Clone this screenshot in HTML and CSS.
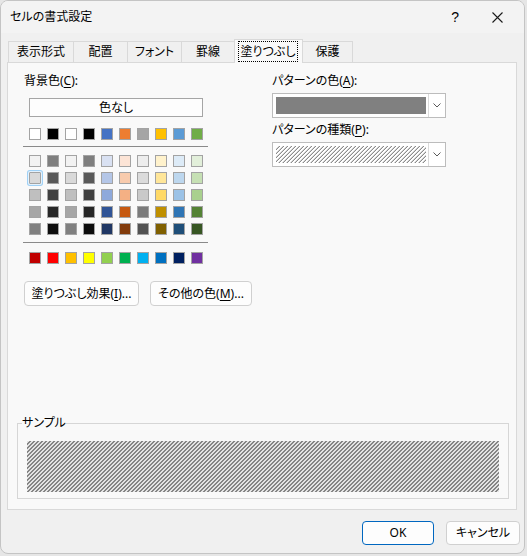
FILE: index.html
```html
<!DOCTYPE html>
<html lang="ja">
<head>
<meta charset="utf-8">
<title>セルの書式設定</title>
<link rel="stylesheet" href="styles.css">
</head>
<body>
<svg class="defs" width="0" height="0" aria-hidden="true">
  <defs>
    <pattern id="hatchDark" width="4" height="4" patternUnits="userSpaceOnUse">
      <rect width="4" height="4" fill="#e4e4e4"/>
      <rect x="2" y="0" width="2" height="1" fill="#858585"/>
      <rect x="1" y="1" width="2" height="1" fill="#858585"/>
      <rect x="0" y="2" width="2" height="1" fill="#858585"/>
      <rect x="0" y="3" width="1" height="1" fill="#858585"/>
      <rect x="3" y="3" width="1" height="1" fill="#858585"/>
    </pattern>
    <pattern id="hatchLight" width="4" height="4" patternUnits="userSpaceOnUse">
      <rect width="4" height="4" fill="#ffffff"/>
      <rect x="3" y="0" width="1" height="1" fill="#8c8c8c"/>
      <rect x="2" y="1" width="1" height="1" fill="#8c8c8c"/>
      <rect x="1" y="2" width="1" height="1" fill="#8c8c8c"/>
      <rect x="0" y="3" width="1" height="1" fill="#8c8c8c"/>
      <rect x="2" y="0" width="1" height="1" fill="#d4d4d4"/>
      <rect x="1" y="1" width="1" height="1" fill="#d4d4d4"/>
      <rect x="0" y="2" width="1" height="1" fill="#d4d4d4"/>
      <rect x="3" y="3" width="1" height="1" fill="#d4d4d4"/>
    </pattern>
  </defs>
</svg>
<div class="dialog">
  <div class="titlebar">
    <span class="title">セルの書式設定</span>
    <span class="help">?</span>
    <span class="close"><svg width="11" height="11" viewBox="0 0 11 11"><path d="M0.5 0.5L10.5 10.5M10.5 0.5L0.5 10.5" stroke="#1a1a1a" stroke-width="1.1" fill="none"/></svg></span>
  </div>
  <div class="tabs">
    <div class="tab t1">表示形式</div>
    <div class="tab t2">配置</div>
    <div class="tab t3">フォント</div>
    <div class="tab t4">罫線</div>
    <div class="tab t5 active"><span class="focus">塗りつぶし</span></div>
    <div class="tab t6">保護</div>
  </div>
  <div class="panel">
    <div class="cols">
      <div class="left">
        <div class="label">背景色(<u>C</u>):</div>
        <div class="none-btn">色なし</div>
        <div class="row">
          <span class="sw" style="background:#FFFFFF"></span>
          <span class="sw" style="background:#000000"></span>
          <span class="sw" style="background:#FFFFFF"></span>
          <span class="sw" style="background:#000000"></span>
          <span class="sw" style="background:#4472C4"></span>
          <span class="sw" style="background:#ED7D31"></span>
          <span class="sw" style="background:#A5A5A5"></span>
          <span class="sw" style="background:#FFC000"></span>
          <span class="sw" style="background:#5B9BD5"></span>
          <span class="sw" style="background:#70AD47"></span>
        </div>
        <div class="sep"></div>
        <div class="grid">
          <span class="sw" style="background:#F2F2F2"></span>
          <span class="sw" style="background:#7F7F7F"></span>
          <span class="sw" style="background:#F2F2F2"></span>
          <span class="sw" style="background:#7F7F7F"></span>
          <span class="sw" style="background:#D9E1F2"></span>
          <span class="sw" style="background:#FCE4D6"></span>
          <span class="sw" style="background:#EDEDED"></span>
          <span class="sw" style="background:#FFF2CC"></span>
          <span class="sw" style="background:#DDEBF7"></span>
          <span class="sw" style="background:#E2EFDA"></span>

          <span class="sw selected" style="background:#D9D9D9"></span>
          <span class="sw" style="background:#595959"></span>
          <span class="sw" style="background:#D9D9D9"></span>
          <span class="sw" style="background:#595959"></span>
          <span class="sw" style="background:#B4C6E7"></span>
          <span class="sw" style="background:#F8CBAD"></span>
          <span class="sw" style="background:#DBDBDB"></span>
          <span class="sw" style="background:#FFE699"></span>
          <span class="sw" style="background:#BDD7EE"></span>
          <span class="sw" style="background:#C6E0B4"></span>

          <span class="sw" style="background:#BFBFBF"></span>
          <span class="sw" style="background:#404040"></span>
          <span class="sw" style="background:#BFBFBF"></span>
          <span class="sw" style="background:#404040"></span>
          <span class="sw" style="background:#8EA9DB"></span>
          <span class="sw" style="background:#F4B084"></span>
          <span class="sw" style="background:#C9C9C9"></span>
          <span class="sw" style="background:#FFD966"></span>
          <span class="sw" style="background:#9BC2E6"></span>
          <span class="sw" style="background:#A9D08E"></span>

          <span class="sw" style="background:#A6A6A6"></span>
          <span class="sw" style="background:#262626"></span>
          <span class="sw" style="background:#A6A6A6"></span>
          <span class="sw" style="background:#262626"></span>
          <span class="sw" style="background:#305496"></span>
          <span class="sw" style="background:#C65911"></span>
          <span class="sw" style="background:#7B7B7B"></span>
          <span class="sw" style="background:#BF8F00"></span>
          <span class="sw" style="background:#2F75B5"></span>
          <span class="sw" style="background:#548235"></span>

          <span class="sw" style="background:#808080"></span>
          <span class="sw" style="background:#0D0D0D"></span>
          <span class="sw" style="background:#808080"></span>
          <span class="sw" style="background:#0D0D0D"></span>
          <span class="sw" style="background:#203764"></span>
          <span class="sw" style="background:#833C0C"></span>
          <span class="sw" style="background:#525252"></span>
          <span class="sw" style="background:#806000"></span>
          <span class="sw" style="background:#1F4E78"></span>
          <span class="sw" style="background:#375623"></span>
        </div>
        <div class="sep sep2"></div>
        <div class="row std">
          <span class="sw" style="background:#C00000"></span>
          <span class="sw" style="background:#FF0000"></span>
          <span class="sw" style="background:#FFC000"></span>
          <span class="sw" style="background:#FFFF00"></span>
          <span class="sw" style="background:#92D050"></span>
          <span class="sw" style="background:#00B050"></span>
          <span class="sw" style="background:#00B0F0"></span>
          <span class="sw" style="background:#0070C0"></span>
          <span class="sw" style="background:#002060"></span>
          <span class="sw" style="background:#7030A0"></span>
        </div>
        <div class="btnrow">
          <div class="btn fx">塗りつぶし効果(<u>I</u>)...</div>
          <div class="btn more">その他の色(<u>M</u>)...</div>
        </div>
      </div>
      <div class="right">
        <div class="label">パターンの色(<u>A</u>):</div>
        <div class="combo">
          <div class="fill gray"></div>
          <div class="drop"><svg width="8" height="5" viewBox="0 0 8 5"><path d="M0.5 0.5L4 4L7.5 0.5" stroke="#5a5a5a" stroke-width="1" fill="none"/></svg></div>
        </div>
        <div class="label lab2">パターンの種類(<u>P</u>):</div>
        <div class="combo">
          <div class="fill"><svg class="pat" width="150" height="17"><rect width="150" height="17" fill="url(#hatchLight)"/></svg></div>
          <div class="drop"><svg width="8" height="5" viewBox="0 0 8 5"><path d="M0.5 0.5L4 4L7.5 0.5" stroke="#5a5a5a" stroke-width="1" fill="none"/></svg></div>
        </div>
      </div>
    </div>
    <fieldset class="sample">
      <legend>サンプル</legend>
      <div class="hatch"><svg class="pat" width="472" height="51"><rect width="472" height="51" fill="url(#hatchDark)"/></svg></div>
    </fieldset>
  </div>
  <div class="footer">
    <div class="btn ok">OK</div>
    <div class="btn cancel">キャンセル</div>
  </div>
</div>
</body>
</html>
```
FILE: styles.css
```css
* { box-sizing: border-box; }
html, body { margin: 0; padding: 0; }
body {
  background: #e6e6e6;
  font-family: "Noto Sans", "Noto Sans CJK JP", sans-serif;
  font-size: 12px;
  color: #000;
  font-feature-settings: "palt";
  width: 527px;
  height: 556px;
  overflow: hidden;
}
u { text-decoration-thickness: 1px; text-underline-offset: 2px; }
.defs { position: absolute; width: 0; height: 0; overflow: hidden; }
.pat { display: block; }

.dialog {
  width: 525px;
  height: 554px;
  border: 1px solid #c4c4c4;
  border-radius: 8px;
  background: #f0f0f0;
  display: flex;
  flex-direction: column;
  overflow: hidden;
}

.titlebar {
  height: 32px;
  flex: none;
  display: flex;
  align-items: center;
  padding-left: 9px;
  background: #f3f3f3;
}
.title { flex: 1; font-size: 12px; line-height: 16px; }
.help { font-size: 14px; line-height: 16px; margin-right: 33px; font-family: "Liberation Sans", sans-serif; }
.close { width: 11px; height: 11px; margin-right: 21px; display: flex; }

.tabs {
  height: 29px;
  flex: none;
  display: flex;
  align-items: flex-end;
  padding-left: 7px;
}
.tab {
  height: 21px;
  border: 1px solid #d9d9d9;
  border-bottom: none;
  margin-right: -1px;
  background: #f0f0f0;
  display: flex;
  align-items: center;
  justify-content: center;
  line-height: 16px;
  white-space: nowrap;
}
.t1 { width: 66px; }
.t2 { width: 55px; }
.t3 { width: 55px; }
.t4 { width: 54px; }
.t5 { width: 69px; }
.t6 { width: 51px; }
.tab.active {
  height: 24px;
  margin-bottom: -1px;
  background: #f9f9f9;
  position: relative;
  z-index: 1;
  align-items: stretch;
  padding: 1px 4px 1px 3px;
}
.focus {
  flex: 1;
  border: 1px dotted #000;
  display: flex;
  align-items: center;
  justify-content: center;
}

.panel {
  flex: none;
  height: 448px;
  margin: 0 7px 0 6px;
  border: 1px solid #d9d9d9;
  background: #f9f9f9;
  display: flex;
  flex-direction: column;
}

.cols {
  display: grid;
  grid-template-columns: 248px 174px;
  padding: 10px 0 0 16px;
}
.label { line-height: 16px; height: 16px; white-space: nowrap; }
.none-btn {
  margin: 9px 0 0 5px;
  width: 174px;
  height: 19px;
  border: 1px solid #a5a5a5;
  background: #fdfdfd;
  text-align: center;
  line-height: 17px;
}
.row {
  display: flex;
  gap: 6px;
  margin: 11px 0 0 5px;
}
.sw {
  display: block;
  width: 12px;
  height: 12px;
  border: 1px solid #a3a3a3;
}
.sw.selected {
  box-shadow: 0 0 0 1px #e4f2fd, 0 0 0 2px #9fd0f5;
  border-radius: 1px;
}
.sep {
  width: 185px;
  height: 1px;
  margin: 6px 0 0 -1px;
  background: #8a8a8a;
}
.grid {
  display: grid;
  grid-template-columns: repeat(10, 12px);
  gap: 5px 6px;
  margin: 8px 0 0 5px;
}
.sep2 { margin-top: 7px; }
.row.std { margin-top: 9px; }

.btnrow {
  display: flex;
  gap: 11px;
  margin-top: 17px;
}
.btn {
  height: 25px;
  border: 1px solid #d0d0d0;
  border-radius: 4px;
  background: #fdfdfd;
  display: flex;
  align-items: center;
  justify-content: center;
  line-height: 16px;
  white-space: nowrap;
}
.fx { width: 115px; }
.more { width: 102px; }

.combo {
  margin-top: 4px;
  width: 174px;
  height: 25px;
  border: 1px solid #bcbcbc;
  background: #fff;
  display: flex;
}
.lab2 { margin-top: 4px; }
.fill {
  width: 150px;
  height: 17px;
  margin: 3px 2px 3px 3px;
  overflow: hidden;
}
.gray { background: #808080; }
.drop {
  width: 17px;
  border-left: 1px solid #dadada;
  display: flex;
  align-items: center;
  justify-content: center;
}

.sample {
  margin: auto 7px 10px 9px;
  border: 1px solid #d6d6d6;
  padding: 10px 0 6px 0;
  min-width: 0;
}
.sample legend {
  padding: 0;
  margin-left: 4px;
  line-height: 16px;
}
.hatch {
  height: 51px;
  margin: 0 9px;
  overflow: hidden;
}

.footer {
  flex: none;
  display: flex;
  justify-content: flex-end;
  gap: 12px;
  padding: 11px 4px 0 0;
}
.footer .btn { height: 24px; }
.ok { width: 72px; border-color: #0067c0; background: #fdfdfd; }
.cancel { width: 74px; }
```
